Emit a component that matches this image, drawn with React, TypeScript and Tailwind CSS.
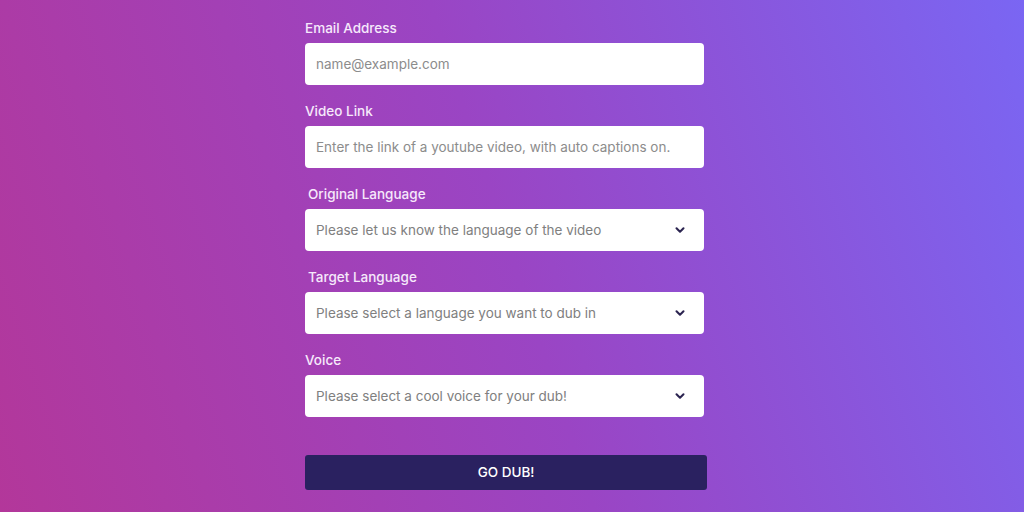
import { ChevronDown } from 'lucide-react';

const fields = [
  { label: 'Email Address', placeholder: 'name@example.com', select: false, indent: false },
  { label: 'Video Link', placeholder: 'Enter the link of a youtube video, with auto captions on.', select: false, indent: false },
  { label: 'Original Language', placeholder: 'Please let us know the language of the video', select: true, indent: true },
  { label: 'Target Language', placeholder: 'Please select a language you want to dub in', select: true, indent: true },
  { label: 'Voice', placeholder: 'Please select a cool voice for your dub!', select: true, indent: false },
];

const App = () => {
  return (
    <div className="w-[1024px] h-[512px] overflow-hidden bg-[linear-gradient(72deg,#b3379a_0%,#9a45c4_50%,#7a66f3_100%)] font-['Inter',sans-serif]">
      <form className="w-[399px] ml-[305px] pt-[18px] flex flex-col gap-[16px]">
        {fields.map(field => (
          <div key={field.label} className="flex flex-col">
            <label className={`h-5 mb-[5px] text-[13.5px] leading-5 font-medium text-[#f6e9fb] ${field.indent ? 'ml-[3px]' : ''}`}>
              {field.label}
            </label>
            {field.select ? (
              <div className="h-[42px] bg-white rounded-[4px] pl-[11px] pr-[17px] flex items-center justify-between">
                <span className="text-[13.5px] text-[#808080]">{field.placeholder}</span>
                <ChevronDown className="w-[14px] h-[14px] text-[#2b2450]" strokeWidth={3.5} />
              </div>
            ) : (
              <input
                className="h-[42px] bg-white rounded-[4px] px-[11px] text-[13.5px] text-[#333] placeholder:text-[#8c8c8c] outline-none"
                placeholder={field.placeholder}
              />
            )}
          </div>
        ))}
        <button type="button" className="mt-[22px] w-[402px] h-[35px] rounded-[3px] bg-[#2a2160] text-white text-[13.5px] font-medium">
          GO DUB!
        </button>
      </form>
    </div>
  );
};

export default App;
